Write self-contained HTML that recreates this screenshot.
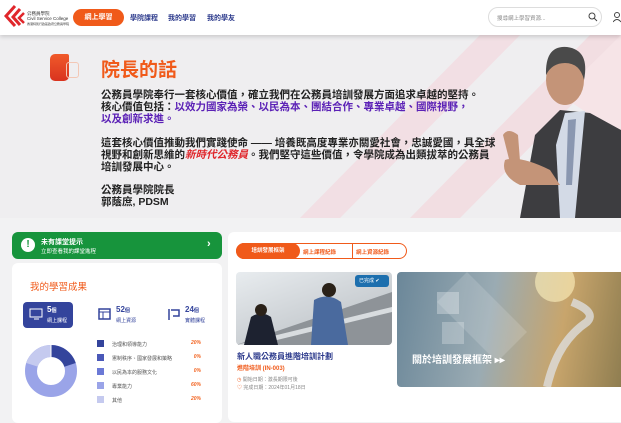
<!DOCTYPE html>
<html><head><meta charset="utf-8"><style>
*{margin:0;padding:0;box-sizing:border-box}
body{width:621px;height:414px;overflow:hidden;background:#f2f2f3;font-family:"Liberation Sans","Noto Sans CJK TC",sans-serif;position:relative}
.abs{position:absolute}
.hdr{left:0;top:0;width:621px;height:35px;background:#fff;box-shadow:0 2px 4px rgba(0,0,0,.15);z-index:5}
.nav{font-size:7px;color:#2c3a8c;font-weight:bold}
.hero{left:0;top:35px;width:621px;height:183px;background:#efeef0;overflow:hidden}
.txt{font-size:10.5px;font-weight:bold;color:#222;line-height:12px;left:101px}
.pur{color:#5b21b6}
.card{background:#fff;border-radius:6px}
.leg{font-size:5px;color:#555}
.pct{font-size:5px;color:#f26522;font-weight:bold;font-style:italic;right:16px;position:absolute}
</style></head><body>
<div class="abs hdr">
 <svg class="abs" style="left:4px;top:5px" width="22" height="26" viewBox="0 0 22 26">
  <path d="M11 1 L2 11 L11 21" stroke="#e0262b" stroke-width="3" fill="none"/>
  <path d="M16 4 L9 12 L16 20" stroke="#e0262b" stroke-width="3" fill="none"/>
  <path d="M20 8 L15 13 L20 18" stroke="#e0262b" stroke-width="2.5" fill="none"/>
 </svg>
 <div class="abs" style="left:27px;top:11px;font-size:4.5px;color:#333;line-height:5px">公務員學院<br>Civil Service College<br><span style="font-size:3px">香港特別行政區政府公務員學院</span></div>
 <div class="abs" style="left:73px;top:9px;width:51px;height:17px;background:#f05a1a;border-radius:9px;color:#fff;font-size:7px;font-weight:bold;text-align:center;line-height:17px">網上學習</div>
 <div class="abs nav" style="left:130px;top:13px">學院課程</div>
 <div class="abs nav" style="left:168px;top:13px">我的學習</div>
 <div class="abs nav" style="left:207px;top:13px">我的學友</div>
 <div class="abs" style="left:488px;top:7px;width:114px;height:20px;border:1px solid #ddd;border-radius:10px;font-size:5.5px;color:#888;padding:6px 0 0 8px">搜尋網上學習資源...</div>
 <svg class="abs" style="left:588px;top:12px" width="10" height="10" viewBox="0 0 10 10"><circle cx="4" cy="4" r="3" stroke="#444" fill="none"/><path d="M6 6 L9 9" stroke="#444"/></svg>
 <svg class="abs" style="left:613px;top:11px" width="8" height="12" viewBox="0 0 8 12"><circle cx="4" cy="4" r="2.5" stroke="#444" fill="none"/><path d="M0 11 Q4 6 8 11" stroke="#444" fill="none"/></svg>
</div>
<div class="abs hero">
 <svg class="abs" style="left:0;top:0" width="621" height="183">
  <path d="M300 183 L480 0 L520 0 L340 183Z" fill="#f3d9de" opacity=".7"/>
  <path d="M410 183 L590 0 L621 0 L621 20 L460 183Z" fill="#f3d9de" opacity=".8"/>
  <path d="M560 60 L621 0 L621 100Z" fill="#f6e4e7"/>
  <path d="M560 75 L535 100 L520 183 L621 183 L621 95 L590 78Z" fill="#3d3d40"/>
  <path d="M565 78 L585 76 L575 183 L560 183 L556 110Z" fill="#d3dae6"/>
  <path d="M568 85 L576 84 L572 150 L566 150Z" fill="#8a97b0"/>
  <ellipse cx="565" cy="45" rx="19" ry="25" fill="#c49478"/>
  <path d="M546 40 Q545 10 567 12 Q590 15 584 45 Q580 28 565 28 Q552 28 546 40Z" fill="#4a4a4a"/>
  <path d="M550 135 Q520 120 505 125 Q500 140 520 150 L560 150Z" fill="#c49478"/>
  <path d="M518 100 Q508 92 503 100 L510 128 L520 126Z" fill="#c49478"/>
 </svg>
 <div class="abs" style="left:50px;top:19px;width:19px;height:27px;background:linear-gradient(#f05a2a,#d9331f);border-radius:5px 2px 5px 5px"></div>
 <div class="abs" style="left:66px;top:27px;width:13px;height:16px;border:1px solid #f3c7b5;border-radius:3px"></div>
 <div class="abs" style="left:101px;top:20px;font-size:19px;color:#f05a1a;font-weight:bold">院長的話</div>
 <div class="abs txt" style="top:54px">公務員學院奉行一套核心價值，確立我們在公務員培訓發展方面追求卓越的堅持。<br>核心價值包括：<span class="pur">以效力國家為榮、以民為本、團結合作、專業卓越、國際視野，<br>以及創新求進。</span></div>
 <div class="abs txt" style="top:102px">這套核心價值推動我們實踐使命 —— 培養既高度專業亦關愛社會，忠誠愛國，具全球<br>視野和創新思維的<i style="color:#e0262b">新時代公務員</i>。我們堅守這些價值，令學院成為出類拔萃的公務員<br>培訓發展中心。</div>
 <div class="abs txt" style="top:149px">公務員學院院長<br>郭蔭庶, PDSM</div>
</div>
<div class="abs" style="left:12px;top:232px;width:210px;height:27px;background:#17943c;border-radius:6px;color:#fff">
 <div class="abs" style="left:9px;top:6px;width:14px;height:14px;border-radius:50%;background:#fff;color:#17943c;font-weight:bold;font-size:10px;text-align:center;line-height:14px">!</div>
 <div class="abs" style="left:29px;top:5px;font-size:7px;font-weight:bold">未有課堂提示</div>
 <div class="abs" style="left:29px;top:15px;font-size:5.5px">立即查看我的課堂進程</div>
 <div class="abs" style="left:195px;top:6px;font-size:11px;font-weight:bold">›</div>
</div>
<div class="abs card" style="left:12px;top:263px;width:210px;height:160px">
 <div class="abs" style="left:18px;top:16px;font-size:9.5px;color:#f05a1a">我的學習成果</div>
 <div class="abs" style="left:11px;top:39px;width:50px;height:26px;background:#34449c;border-radius:4px;color:#fff">
  <svg class="abs" style="left:6px;top:5px" width="15" height="13"><rect x="1" y="2" width="12" height="8" stroke="#fff" fill="none"/><path d="M5 12 H10" stroke="#fff"/></svg>
  <div class="abs" style="left:24px;top:3px;font-size:8px;font-weight:bold">5<span style="font-size:5px">個</span></div>
  <div class="abs" style="left:24px;top:15px;font-size:5px">網上課程</div>
 </div>
 <svg class="abs" style="left:86px;top:45px" width="13" height="12"><rect x="1" y="1" width="11" height="10" stroke="#34449c" fill="none" stroke-width="1.5"/><path d="M1 4 H12 M5 4 V11" stroke="#34449c"/></svg>
 <div class="abs" style="left:104px;top:42px;font-size:8px;font-weight:bold;color:#34449c">52<span style="font-size:5px">個</span></div>
 <div class="abs" style="left:104px;top:54px;font-size:5px;color:#34449c">網上資源</div>
 <svg class="abs" style="left:155px;top:44px" width="13" height="14"><path d="M2 2 V13 M4 3 H12 V9 H6" stroke="#34449c" fill="none" stroke-width="1.5"/></svg>
 <div class="abs" style="left:173px;top:42px;font-size:8px;font-weight:bold;color:#34449c">24<span style="font-size:5px">個</span></div>
 <div class="abs" style="left:173px;top:54px;font-size:5px;color:#34449c">實體課程</div>
 <svg class="abs" style="left:13px;top:82px" width="52" height="52" viewBox="-26 -26 52 52">
  <circle r="20" fill="none" stroke="#9aa4e8" stroke-width="12"/>
  <circle r="20" fill="none" stroke="#c5caef" stroke-width="12" stroke-dasharray="25.1 200" transform="rotate(-162)"/>
  <circle r="20" fill="none" stroke="#34449c" stroke-width="12" stroke-dasharray="25.1 200" transform="rotate(-90)"/>
  <path d="M0 -27 V-13" stroke="#fff" stroke-width="1"/>
 </svg>
 <div class="abs" style="left:85px;top:77px;width:120px">
  <div style="position:relative;height:14px"><span class="abs" style="left:0;top:0;width:7px;height:7px;background:#34449c"></span><span class="abs leg" style="left:15px;top:1px">治理和領導能力</span><span class="pct">20%</span></div>
  <div style="position:relative;height:14px"><span class="abs" style="left:0;top:0;width:7px;height:7px;background:#4a58b8"></span><span class="abs leg" style="left:15px;top:1px">憲制秩序、國家發展和策略</span><span class="pct">0%</span></div>
  <div style="position:relative;height:14px"><span class="abs" style="left:0;top:0;width:7px;height:7px;background:#6b79d6"></span><span class="abs leg" style="left:15px;top:1px">以民為本的服務文化</span><span class="pct">0%</span></div>
  <div style="position:relative;height:14px"><span class="abs" style="left:0;top:0;width:7px;height:7px;background:#9aa4e8"></span><span class="abs leg" style="left:15px;top:1px">專業能力</span><span class="pct">60%</span></div>
  <div style="position:relative;height:14px"><span class="abs" style="left:0;top:0;width:7px;height:7px;background:#c5caef"></span><span class="abs leg" style="left:15px;top:1px">其他</span><span class="pct">20%</span></div>
 </div>
</div>
<div class="abs card" style="left:228px;top:232px;width:400px;height:190px">
 <div class="abs" style="left:8px;top:11px;width:171px;height:16px;border:1px solid #f05a1a;border-radius:8px"></div>
 <div class="abs" style="left:8px;top:11px;width:64px;height:16px;background:#f05a1a;border-radius:8px;color:#fff;font-size:5.5px;font-weight:bold;text-align:center;line-height:16px">培訓發展框架</div>
 <div class="abs" style="left:75px;top:16px;font-size:5.5px;color:#f05a1a;font-weight:bold">網上課程紀錄</div>
 <div class="abs" style="left:124px;top:11px;width:1px;height:16px;border-right:1px solid #f05a1a;border-radius:0 8px 8px 0"></div>
 <div class="abs" style="left:128px;top:16px;font-size:5.5px;color:#f05a1a;font-weight:bold">網上資源紀錄</div>
 <div class="abs" style="left:8px;top:40px;width:156px;height:73px;border-radius:4px;overflow:hidden;background:linear-gradient(160deg,#e8ecef,#b5babf)">
  <svg width="156" height="73"><path d="M0 73 L156 20 L156 73Z" fill="#8e9398"/><path d="M0 73 L156 35 L156 40 L0 78Z" fill="#d8dcdf"/>
  <path d="M15 45 Q25 38 35 45 L42 73 L8 73Z" fill="#1d2230"/><circle cx="25" cy="38" r="6" fill="#2a2118"/>
  <path d="M78 28 Q92 20 105 30 L112 73 L75 73Z" fill="#4a6a9e"/><circle cx="93" cy="18" r="7" fill="#2a2118"/></svg>
  <div class="abs" style="left:119px;top:3px;width:34px;height:12px;background:#1d6fae;border-radius:3px;color:#fff;font-size:5px;line-height:12px;padding-left:4px">已完成 ✔</div>
 </div>
 <div class="abs" style="left:9px;top:119px;font-size:8px;color:#2c3a8c;font-weight:bold">新人職公務員進階培訓計劃</div>
 <div class="abs" style="left:9px;top:131px;font-size:6px;color:#f05a1a;font-weight:bold">進階培訓 (IN-003)</div>
 <div class="abs" style="left:9px;top:144px;font-size:5px;color:#888"><span style="color:#f05a1a">◷</span> 開始日期：激長期限可後</div>
 <div class="abs" style="left:9px;top:152px;font-size:5px;color:#888"><span style="color:#f05a1a">♡</span> 完成日期：2024年01月18日</div>
 <div class="abs" style="left:169px;top:40px;width:230px;height:115px;border-radius:4px;overflow:hidden;background:linear-gradient(100deg,#6b8799 0%,#9aabb3 40%,#c8a56c 70%,#8a7a4e 100%)">
  <svg width="230" height="115"><circle cx="158" cy="10" r="20" fill="#fff3c0" opacity=".6"/>
  <path d="M150 115 Q160 70 190 50 Q200 40 175 30" stroke="#ddd" stroke-width="8" fill="none" opacity=".8"/>
  <path d="M40 30 L100 90 L130 60 L70 0Z" fill="#fff" opacity=".15"/>
  <rect x="40" y="20" width="22" height="22" fill="#fff" opacity=".3"/><rect x="45" y="50" width="22" height="22" fill="#fff" opacity=".25"/></svg>
  <div class="abs" style="left:15px;top:79px;font-size:10px;color:#fff;font-weight:bold">關於培訓發展框架 ▸▸</div>
 </div>
</div>
</body></html>
